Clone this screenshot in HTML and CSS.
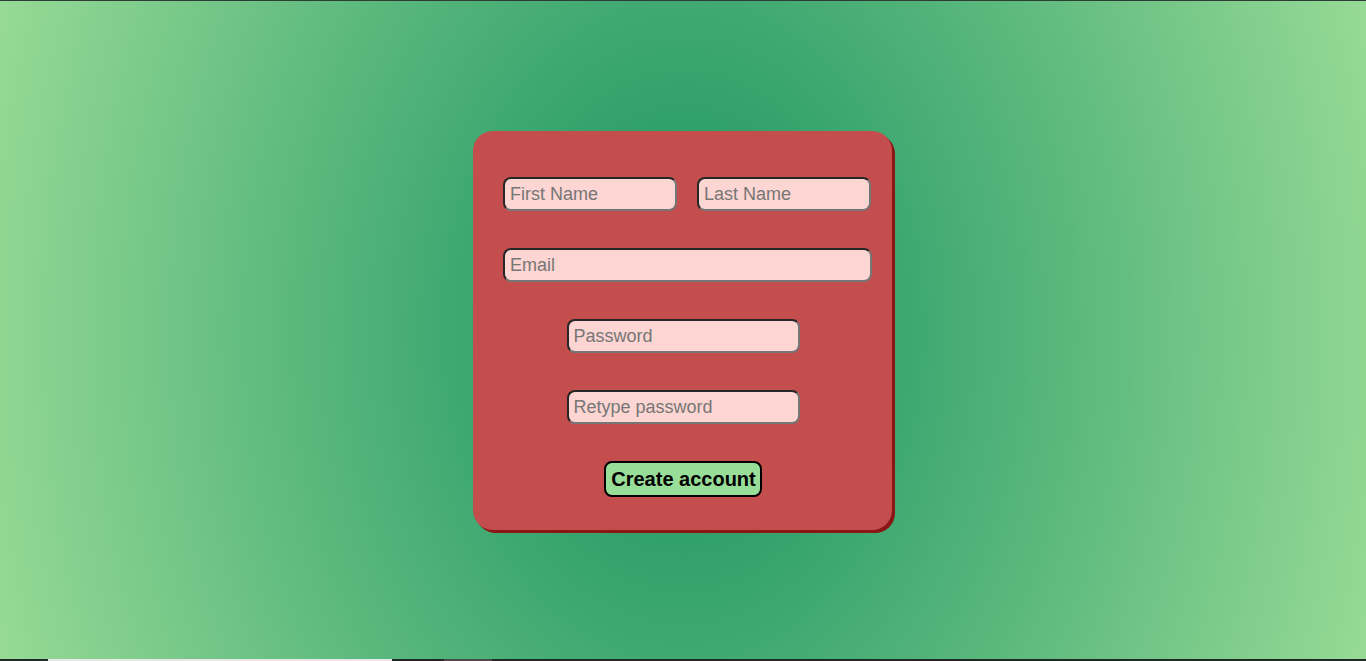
FILE: index.html
```html
<!DOCTYPE html>
<html lang="en">
<head>
<meta charset="utf-8">
<title>Create account</title>
<link rel="stylesheet" href="styles.css">
</head>
<body>
<div class="topline"></div>
<main class="stage">
  <form class="card">
    <div class="row">
      <input class="field half" type="text" placeholder="First Name">
      <input class="field half" type="text" placeholder="Last Name">
    </div>
    <input class="field full" type="email" placeholder="Email">
    <input class="field pass" type="password" placeholder="Password">
    <input class="field pass" type="password" placeholder="Retype password">
    <button class="submit" type="button">Create account</button>
  </form>
</main>
<div class="bottombar">
  <span class="seg dark1"></span>
  <span class="seg white"></span>
  <span class="seg dark2"></span>
  <span class="seg gray"></span>
  <span class="seg dark3"></span>
</div>
</body>
</html>
```
FILE: styles.css
```css
* { box-sizing: border-box; }
html, body { margin: 0; height: 100%; }
body {
  display: flex;
  flex-direction: column;
  font-family: "Liberation Sans", Arial, sans-serif;
  background: radial-gradient(ellipse 60% 170% at 50% 50%, #2c9b68 0%, #30a06b 18%, #9cdd98 92%);
  overflow: hidden;
}
.topline { height: 1px; background: #2f3b35; flex: none; }
.stage {
  flex: 1;
  display: flex;
  align-items: center;
  justify-content: center;
}
.card {
  width: 419px;
  height: 399px;
  margin-top: 1px;
  margin-left: -1px;
  padding: 46px 30px 33px;
  background: #c44d4d;
  border-radius: 20px;
  box-shadow: 3px 3px 0 #8a1616;
  display: flex;
  flex-direction: column;
  align-items: flex-start;
  gap: 37px;
}
.row { display: flex; gap: 20px; }
.field {
  height: 34px;
  border-width: 2px;
  border-style: solid;
  border-color: #262626 #767676 #767676 #262626;
  border-radius: 8px;
  background: #fdd5d2;
  padding: 0 5px;
  font-family: "Liberation Sans", Arial, sans-serif;
  font-size: 18px;
  color: #333;
  outline: none;
}
.field::placeholder { color: #767676; }
.half { width: 174px; }
.full { width: 369px; }
.pass { width: 233px; align-self: center; margin-left: 1px; }
.submit {
  align-self: center;
  width: 158px;
  height: 36px;
  border: 2px solid #000;
  border-radius: 8px;
  background: #98dd98;
  color: #000;
  font-family: "Liberation Sans", Arial, sans-serif;
  font-weight: bold;
  font-size: 20px;
  padding: 0 0 0 2px;
}
.bottombar { height: 2px; display: flex; flex: none; }
.seg { display: block; height: 2px; }
.dark1 { width: 48px; background: #1e2a24; }
.white { width: 344px; background: #e8e8e8; }
.dark2 { width: 52px; background: #1e2a24; }
.gray { width: 48px; background: #4a4a4a; }
.dark3 { flex: 1; background: #1e2a24; }
```
